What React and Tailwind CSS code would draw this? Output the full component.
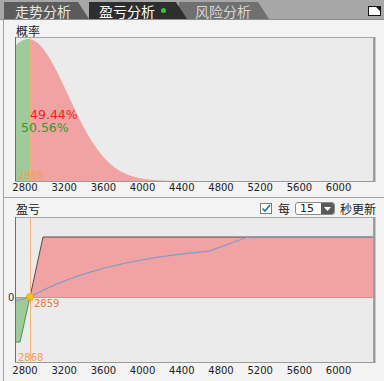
import React from "react";

const TICKS = [2800, 3200, 3600, 4000, 4400, 4800, 5200, 5600, 6000];
const tickX = (v) => 25 + ((v - 2800) / 400) * 39.2;
const NUM = "'DejaVu Sans', Verdana, sans-serif";

// probability curve (svg coords, plot height 144)
const dens = (x) => 144 - 142 * Math.exp(-((x - 28) ** 2) / (2 * 40 * 40));

const areaPath = (x0, x1) => {
  let d = `M${x0},144`;
  for (let x = x0; x <= x1; x += 1) d += ` L${x},${dens(x).toFixed(2)}`;
  return d + ` L${x1},144 Z`;
};

const blueCurve = () => {
  let d = "M16,84 L30,80";
  for (let x = 31; x <= 210; x += 2) {
    const y = 80 - 55 * (1 - Math.exp(-(x - 30) / 100));
    d += ` L${x},${y.toFixed(2)}`;
  }
  return d + " L248,20 L373,20";
};

const Axis = ({ y }) => (
  <g fontFamily={NUM} fontSize="10" fill="#222">
    {TICKS.map((t) => (
      <text key={t} x={tickX(t)} y={y} textAnchor="middle">
        {t}
      </text>
    ))}
  </g>
);

const Frame = ({ h }) => (
  <rect x="15.5" y="0.5" width="358" height={h} fill="#ebebeb" stroke="#a8a8a8" />
);

const FrameEdges = ({ h }) => (
  <>
    <line x1="15.5" y1="0" x2="15.5" y2={h + 1} stroke="#6e6e6e" />
    <line x1="15" y1={h + 0.5} x2="375" y2={h + 0.5} stroke="#9a9a9a" />
    <line x1="374.5" y1="0" x2="374.5" y2={h + 1} stroke="#9a9a9a" strokeWidth="2" />
  </>
);

const ProbChart = () => (
  <svg width="384" height="158" className="block">
    <Frame h={144} />
    <path d={areaPath(16, 30)} fill="#9fca9b" />
    <path d={areaPath(30, 373)} fill="#f1a3a3" />
    <line x1="30.5" y1="1" x2="30.5" y2="144" stroke="#f2b27a" />
    <FrameEdges h={144} />
    <g fontFamily={NUM} fontSize="12.5">
      <text x="30" y="82" fill="#f21c1c">49.44%</text>
      <text x="21" y="94.5" fill="#2f9a2f">50.56%</text>
    </g>
    <text x="18" y="142" fontFamily={NUM} fontSize="10" fill="#f0a050">2868</text>
    <Axis y={154} />
  </svg>
);

const PnlChart = () => (
  <svg width="384" height="162" className="block">
    <Frame h={145} />
    <path d="M16,80 L30,80 L20,125 L16,125 Z" fill="#9fca9b" />
    <path d="M30,80 L43,20 L373,20 L373,80 Z" fill="#f1a3a3" />
    <line x1="16" y1="80.5" x2="373" y2="80.5" stroke="#d88c8c" />
    <path d="M16,125 L20,125 L30,80" fill="none" stroke="#4f8f4f" />
    <path d="M30,80 L43,20 L373,20" fill="none" stroke="#5a4a4a" />
    <path d={blueCurve()} fill="none" stroke="#7f9cc6" strokeWidth="1.2" />
    <line x1="30.5" y1="1" x2="30.5" y2="145" stroke="#f2b27a" />
    <circle cx="30" cy="80" r="3.5" fill="#f7c61a" stroke="#f0a020" />
    <FrameEdges h={145} />
    <text x="8" y="84" fontFamily={NUM} fontSize="10" fill="#333">0</text>
    <text x="34" y="90" fontFamily={NUM} fontSize="10" fill="#f07830">2859</text>
    <text x="18" y="144" fontFamily={NUM} fontSize="10" fill="#f0a050">2868</text>
    <Axis y={157} />
  </svg>
);

const Tab = ({ children, className }) => (
  <div
    className={`flex h-[17px] items-center [clip-path:polygon(0_0,calc(100%-11px)_0,100%_100%,0_100%)] ${className}`}
  >
    {children}
  </div>
);

export default function App() {
  return (
    <div
      className="relative h-[381px] w-[384px] overflow-hidden bg-[#f3f3f3] text-[#222]"
      style={{ fontFamily: "'Noto Sans CJK SC', 'DejaVu Sans', sans-serif" }}
    >
      {/* tab strip */}
      <div className="relative flex h-[20px] items-end border-b border-[#8c8c8c] bg-[#a7a7a7] pl-[4px] text-[14px] leading-none">
        <Tab className="w-[85px] bg-[#5b5b5b] pl-[11px] text-[#e6e6e6]">走势分析</Tab>
        <Tab className="z-10 w-[98px] bg-[#2e2e2e] pl-[10px] text-white">
          盈亏分析
          <span className="ml-[6px] inline-block h-[5px] w-[5px] rounded-full bg-[#3fbf3f]" />
        </Tab>
        <Tab className="-ml-[8px] w-[90px] bg-[#707070] pl-[16px] text-[#d6d6d6]">风险分析</Tab>
        <svg className="absolute right-[3px] top-[6px]" width="13" height="10">
          <rect x="0.5" y="0.5" width="12" height="9" fill="#fff" stroke="#111" />
          <path d="M7,0 L13,0 L13,6 Z" fill="#111" />
        </svg>
      </div>

      {/* probability panel */}
      <div className="ml-[3px] h-[177px] border-l border-[#a3a3a3]">
        <div className="flex h-[17px] items-end pl-[12px] text-[12px] leading-none">概率</div>
        <div className="-ml-[4px]">
          <ProbChart />
        </div>
      </div>

      {/* profit / loss panel */}
      <div className="ml-[3px] h-[184px] border-l border-t border-[#a3a3a3]">
        <div className="flex h-[19px] items-end justify-between pb-[2px] pl-[12px] pr-[8px] text-[12px] leading-none">
          <span>盈亏</span>
          <div className="flex items-center gap-[5px]">
            <svg width="12" height="11" className="mr-[1px]">
              <rect x="0.5" y="0.5" width="11" height="10" fill="#fff" stroke="#7a7a7a" />
              <path d="M2.5,5.5 L5,8 L10,2" fill="none" stroke="#1f6fb5" strokeWidth="1.6" />
            </svg>
            <span>每</span>
            <div className="flex h-[13px] w-[40px] items-center overflow-hidden rounded-[3px] border border-[#8a8a8a] bg-white">
              <span className="flex-1 pl-[4px] text-[11px]" style={{ fontFamily: NUM }}>15</span>
              <div className="flex h-full w-[13px] items-center justify-center bg-[#5a5a5a]">
                <svg width="7" height="4">
                  <path d="M0,0 L7,0 L3.5,4 Z" fill="#fff" />
                </svg>
              </div>
            </div>
            <span>秒更新</span>
          </div>
        </div>
        <div className="-ml-[4px]">
          <PnlChart />
        </div>
      </div>
    </div>
  );
}
